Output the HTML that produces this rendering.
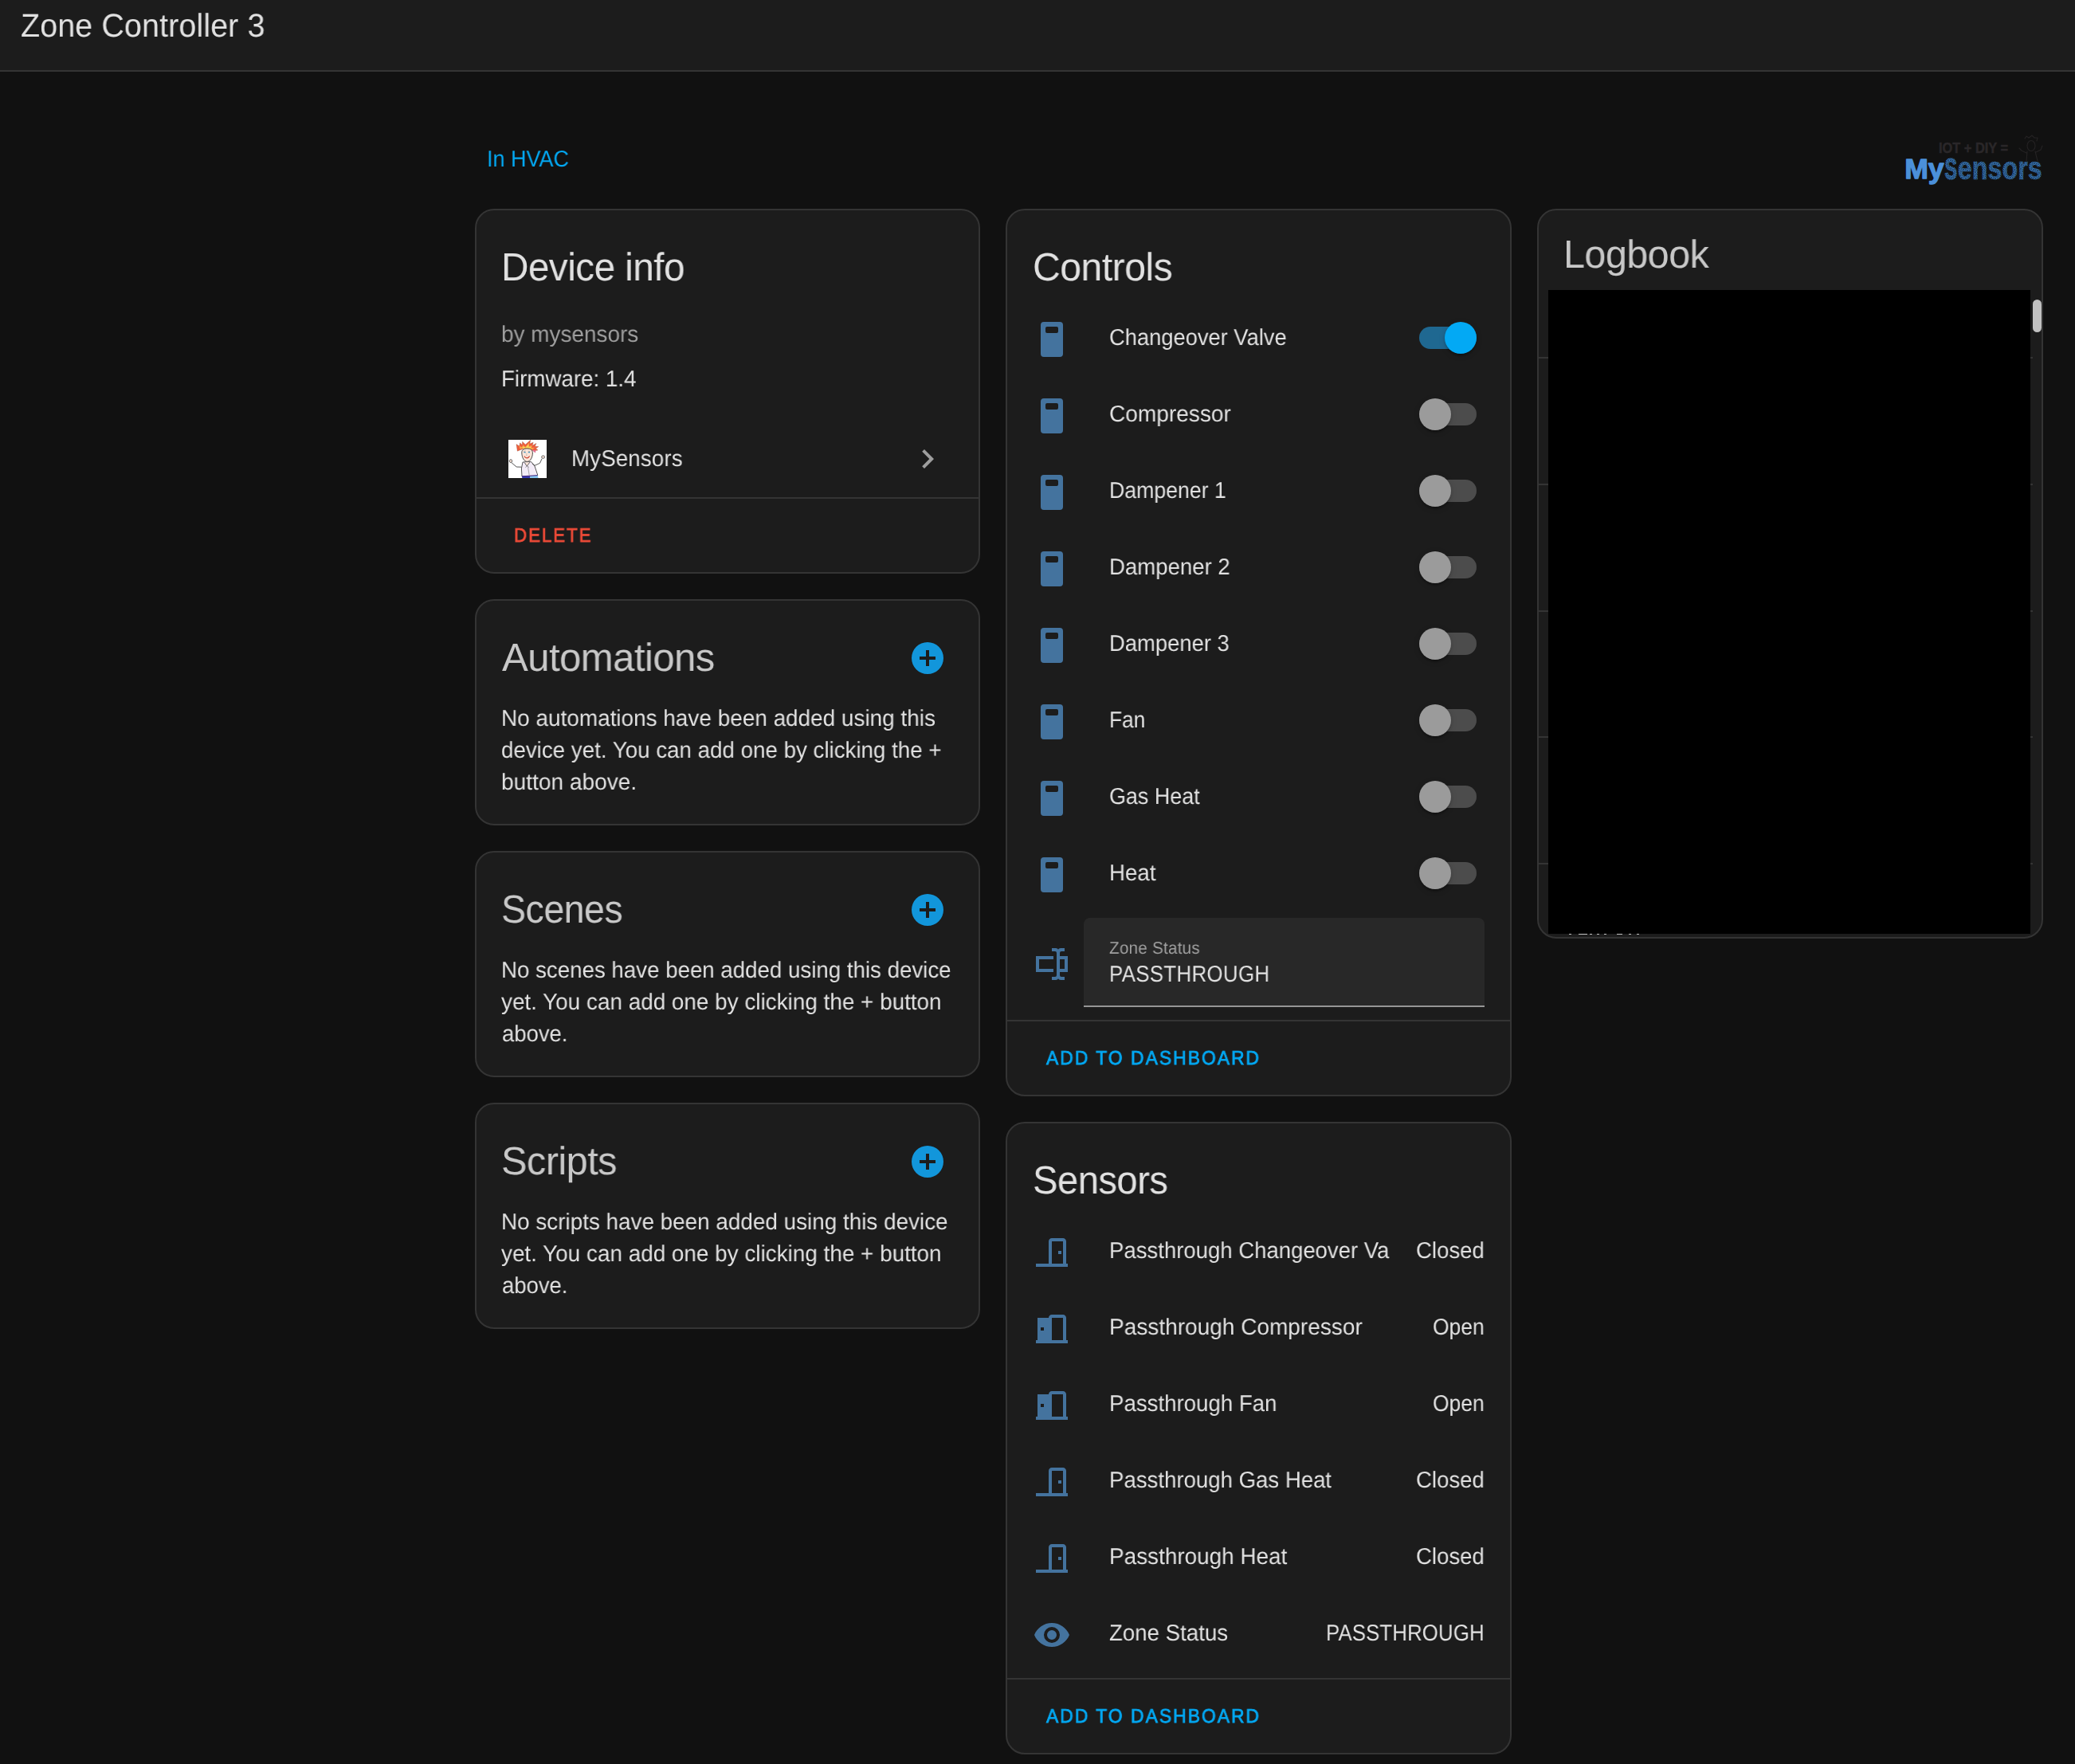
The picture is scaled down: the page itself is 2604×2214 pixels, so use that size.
<!doctype html>
<html lang="en"><head><meta charset="utf-8"><title>Zone Controller 3</title><style>
html,body{margin:0;padding:0}
body{width:2604px;height:2214px;position:relative;overflow:hidden;background:#111;font-family:"Liberation Sans",sans-serif}
.hdr{position:absolute;left:0;top:0;width:2604px;height:88px;background:#1c1c1c;border-bottom:2px solid #343434}
.card{position:absolute;box-sizing:border-box;background:#1c1c1c;border:2px solid #343434;border-radius:24px;margin:0}
.t{position:absolute;white-space:pre;line-height:1;transform-origin:0 0;z-index:2;will-change:transform;text-rendering:geometricPrecision}
.i{position:absolute;display:block;z-index:2}
.hr{position:absolute;height:2px;background:#343434;z-index:1}
.sw{position:absolute;width:72px;height:44px;z-index:2}
.sw b{position:absolute;left:0;top:6px;width:72px;height:28px;border-radius:14px;background:#4c4c4c}
.sw i{position:absolute;left:0;top:0;width:40px;height:40px;border-radius:50%;background:#9b9b9b;box-shadow:0 4px 2px -2px rgba(0,0,0,.2),0 2px 3px rgba(0,0,0,.14),0 2px 8px rgba(0,0,0,.12)}
.sw.on b{background:#1f6891}
.sw.on i{left:32px;background:#03a9f4}
.sel{position:absolute;background:#282828;border-radius:8px 8px 0 0;border-bottom:2px solid #969696;z-index:1}
.redact{position:absolute;background:#000;z-index:3}
.thumb{position:absolute;background:#c1c1c1;border-radius:6px;z-index:3}
.specks{position:absolute;width:90px;height:1px;opacity:.8;z-index:4;background:linear-gradient(90deg,#eee 0 3px,transparent 3px 12px,#eee 12px 23px,transparent 23px 26px,#eee 26px 29px,transparent 29px 35px,#eee 35px 38px,transparent 38px 44px,#eee 44px 47px,transparent 47px 60px,#eee 60px 67px,transparent 67px 75px,#eee 75px 78px,transparent 78px 85px,#eee 85px 88px,transparent 88px)}
</style></head>
<body>
<header class="hdr"><span class="t" style="left:26.36px;top:11.90px;font-size:41.08px;color:#e1e1e1;letter-spacing:0.1px;transform:scaleX(0.9605)">Zone Controller 3</span></header>
<main>
<nav><span class="t" style="left:611.06px;top:186.10px;font-size:28.76px;color:#03a9f4;transform:scaleX(0.9379)">In HVAC</span></nav>
<aside>
<svg class="i" style="left:2380px;top:160px" width="190" height="80" viewBox="2380 160 190 80">
<defs><pattern id="hatch" width="2.6" height="2.6" patternUnits="userSpaceOnUse" patternTransform="rotate(12)"><rect width="2.6" height="2.6" fill="#4088cc"/><path d="M0 0L2.6 2.6M2.6 0L0 2.6" stroke="#152a45" stroke-width="0.75"/></pattern></defs>
<g font-family="'Liberation Sans',sans-serif" font-weight="bold">
<text x="2433" y="191.9" font-size="19" fill="#2a2729" stroke="#2a2729" stroke-width="0.5" textLength="87" lengthAdjust="spacingAndGlyphs">IOT + DIY =</text>
<text x="2390.2" y="223.9" font-size="35" fill="#4b90da" stroke="#4b90da" stroke-width="1.3" stroke-linejoin="round" textLength="49.5" lengthAdjust="spacingAndGlyphs">My</text>
<text x="2440.4" y="224.6" font-size="36.5" fill="url(#hatch)" stroke="url(#hatch)" stroke-width="1.4" stroke-linejoin="round" textLength="15.5" lengthAdjust="spacingAndGlyphs">S</text>
<text x="2456.8" y="224.6" font-size="40" fill="url(#hatch)" stroke="url(#hatch)" stroke-width="0.5" stroke-linejoin="round" textLength="106" lengthAdjust="spacingAndGlyphs">ensors</text>
</g>
<g fill="none" stroke="#252324" stroke-width="1.1" stroke-linecap="round">
<path d="M2541 174l2 -3 3 2 4 -3 3 3 4 0 -1 4"/><ellipse cx="2549" cy="183" rx="5" ry="6.5"/>
<path d="M2544 190l-1 12M2554 190l3 12M2543 192l-6 -3 -3 -3M2555 191l6 -3 2 -5"/>
</g></svg>
</aside>
<article>
<section class="card " style="left:596px;top:262px;width:634px;height:458px"></section>
<span class="t" style="left:629.48px;top:310.80px;font-size:49.30px;color:#e1e1e1;letter-spacing:-0.576px;transform:scaleX(0.9680)">Device info</span><span class="t" style="left:629.39px;top:405.80px;font-size:28.76px;color:#9e9e9e;transform:scaleX(0.9710)">by mysensors</span><span class="t" style="left:629.35px;top:461.80px;font-size:28.76px;color:#e1e1e1;transform:scaleX(0.9644)">Firmware: 1.4</span><span class="t" style="left:716.54px;top:562.00px;font-size:28.76px;color:#e1e1e1;letter-spacing:0.157px;transform:scaleX(0.9621)">MySensors</span><span class="t" style="left:645.32px;top:660.60px;font-size:24.50px;color:#ef4b38;-webkit-text-stroke:0.8px currentColor;letter-spacing:2.19px;transform:scaleX(0.9074)">DELETE</span>
<svg class="i" style="left:638px;top:552px" width="48" height="48" viewBox="0 0 48 48">
<rect width="48" height="48" fill="#fff"/>
<path d="M11.3 14.2L10 5.6 13.8 8 14.6 3.8 17.4 6.6 17.6 2.2 21.4 6 27.8 0.2 26.8 5 31.2 3.2 30 7.2 35 4.4 33.2 8.2 37.8 8.6 34.4 11 37 13 33.6 13.6 33.8 16 30 13 26 11.4 21 11 16 12.2Z" fill="#ef5d3c" stroke="#7a3a2a" stroke-width="0.3"/>
<path d="M14.6 11.4L13.2 7 16.8 9.6 18.4 6.4 21.2 9.2 26.2 3.4 26 8.2 29.6 6.8 29.2 10.2 33 9.8 30 12.2 25 10.4 20 10.2Z" fill="#f8a94a"/>
<path d="M17.5 11L19 8.2 21.5 10 25 6 25.4 9.6 28 9 27.5 11.4 23.5 10.6Z" fill="#fbd65a"/>
<path d="M31 12.4l3.4 1.4 -0.6 2.2 -3.2 -2.4Z" fill="#e86a9a"/>
<path d="M16.8 16C16.8 12.2 19.8 11 23.5 11 27.6 11 30.6 12.4 30.4 17 30.2 21.6 28 27.2 23.6 27.4 19.6 27.4 16.8 22 16.8 16Z" fill="#fbe6da" stroke="#3b3737" stroke-width="0.9"/>
<path d="M19.4 15.5l2.2 0.4M24.8 15.8l2.2 -0.2" stroke="#2487b8" stroke-width="1.1"/>
<path d="M19 14.3l2.8 -0.4M24.6 14.2l2.6 0.3" stroke="#7a6a66" stroke-width="0.4"/>
<path d="M20.2 21c1.7 2.5 4.8 2.4 6.1 -0.2" fill="none" stroke="#c93a27" stroke-width="1.2" stroke-linecap="round"/>
<path d="M23 16.8l-0.3 3.2 1 0.2" fill="none" stroke="#a8948a" stroke-width="0.5"/>
<path d="M18 28L28.6 27.6 33 33 36.8 44.4 35 45.6 17 46 16.4 36Z" fill="#f3ecf8" stroke="#444" stroke-width="0.9"/>
<path d="M20 28.4l3.3 4.6 3.5 -4.8" fill="#fbe6da" stroke="#444" stroke-width="0.8"/>
<path d="M23.3 33l-1.8 1.6M23.3 33l2.4 1.4" stroke="#444" stroke-width="0.6"/>
<path d="M24.6 34.4l1.6 10" stroke="#777" stroke-width="0.6"/>
<path d="M16.4 34.2L10.2 34 3.8 28.6" fill="none" stroke="#444" stroke-width="0.9"/>
<path d="M30 30l3 2.3 6.5 -3 2.6 -5.6" fill="none" stroke="#444" stroke-width="0.9"/>
<ellipse cx="3" cy="26.6" rx="1.7" ry="1.9" fill="#fbe6da" stroke="#444" stroke-width="0.8"/>
<ellipse cx="43.6" cy="21.6" rx="2" ry="1.7" fill="#fbe6da" stroke="#444" stroke-width="0.8"/>
<path d="M17 45.7L27 45.3 27.5 48 17.3 48Z" fill="#3539b0"/><path d="M27 45.3L36.6 44.6 37.6 48 27.5 48Z" fill="#86c4f0"/>
<path d="M17 45.8L36.6 44.6" stroke="#45237e" stroke-width="1"/>
</svg>
<svg class="i" style="left:1140px;top:552px" width="48" height="48" viewBox="0 0 24 24"><path fill="#9e9e9e" d="M8.59,16.58L13.17,12L8.59,7.41L10,6L16,12L10,18L8.59,16.58Z"/></svg>
<div class="hr" style="left:598px;top:624px;width:630px"></div>
</article>
<article>
<section class="card " style="left:596px;top:752px;width:634px;height:284px"></section>
<span class="t" style="left:630.09px;top:800.80px;font-size:49.30px;color:#c8c8c8;letter-spacing:-0.576px;transform:scaleX(0.9967)">Automations</span><span class="t" style="left:629.34px;top:887.80px;font-size:28.76px;color:#e1e1e1;transform:scaleX(0.9713)">No automations have been added using this</span><span class="t" style="left:629.42px;top:927.80px;font-size:28.76px;color:#e1e1e1;transform:scaleX(0.9642)">device yet. You can add one by clicking the +</span><span class="t" style="left:629.38px;top:967.80px;font-size:28.76px;color:#e1e1e1;transform:scaleX(0.9761)">button above.</span>
<svg class="i" style="left:1140px;top:802px" width="48" height="48" viewBox="0 0 24 24"><path fill="#1296db" d="M17,13H13V17H11V13H7V11H11V7H13V11H17M12,2A10,10 0 0,0 2,12A10,10 0 0,0 12,22A10,10 0 0,0 22,12A10,10 0 0,0 12,2Z"/></svg>
</article>
<article>
<section class="card " style="left:596px;top:1068px;width:634px;height:284px"></section>
<span class="t" style="left:629.01px;top:1116.80px;font-size:49.30px;color:#c8c8c8;letter-spacing:-0.576px;transform:scaleX(0.9448)">Scenes</span><span class="t" style="left:629.36px;top:1203.80px;font-size:28.76px;color:#e1e1e1;transform:scaleX(0.9625)">No scenes have been added using this device</span><span class="t" style="left:629.49px;top:1243.80px;font-size:28.76px;color:#e1e1e1;transform:scaleX(0.9697)">yet. You can add one by clicking the + button</span><span class="t" style="left:629.61px;top:1283.80px;font-size:28.76px;color:#e1e1e1;transform:scaleX(0.9551)">above.</span>
<svg class="i" style="left:1140px;top:1118px" width="48" height="48" viewBox="0 0 24 24"><path fill="#1296db" d="M17,13H13V17H11V13H7V11H11V7H13V11H17M12,2A10,10 0 0,0 2,12A10,10 0 0,0 12,22A10,10 0 0,0 22,12A10,10 0 0,0 12,2Z"/></svg>
</article>
<article>
<section class="card " style="left:596px;top:1384px;width:634px;height:284px"></section>
<span class="t" style="left:628.91px;top:1432.80px;font-size:49.30px;color:#c8c8c8;letter-spacing:-0.576px;transform:scaleX(0.9884)">Scripts</span><span class="t" style="left:629.34px;top:1519.80px;font-size:28.76px;color:#e1e1e1;transform:scaleX(0.9689)">No scripts have been added using this device</span><span class="t" style="left:629.49px;top:1559.80px;font-size:28.76px;color:#e1e1e1;transform:scaleX(0.9697)">yet. You can add one by clicking the + button</span><span class="t" style="left:629.61px;top:1599.80px;font-size:28.76px;color:#e1e1e1;transform:scaleX(0.9551)">above.</span>
<svg class="i" style="left:1140px;top:1434px" width="48" height="48" viewBox="0 0 24 24"><path fill="#1296db" d="M17,13H13V17H11V13H7V11H11V7H13V11H17M12,2A10,10 0 0,0 2,12A10,10 0 0,0 12,22A10,10 0 0,0 22,12A10,10 0 0,0 12,2Z"/></svg>
</article>
<article>
<section class="card " style="left:1262px;top:262px;width:635px;height:1114px"></section>
<span class="t" style="left:1296.31px;top:310.80px;font-size:49.30px;color:#e1e1e1;letter-spacing:-0.576px;transform:scaleX(0.9784)">Controls</span><span class="t" style="left:1392.03px;top:410.10px;font-size:28.76px;color:#e1e1e1;transform:scaleX(0.9497)">Changeover Valve</span><span class="t" style="left:1391.99px;top:506.10px;font-size:28.76px;color:#e1e1e1;transform:scaleX(0.9758)">Compressor</span><span class="t" style="left:1391.94px;top:602.10px;font-size:28.76px;color:#e1e1e1;transform:scaleX(0.9273)">Dampener 1</span><span class="t" style="left:1391.87px;top:698.10px;font-size:28.76px;color:#e1e1e1;transform:scaleX(0.9583)">Dampener 2</span><span class="t" style="left:1391.88px;top:794.10px;font-size:28.76px;color:#e1e1e1;transform:scaleX(0.9524)">Dampener 3</span><span class="t" style="left:1391.97px;top:890.10px;font-size:28.76px;color:#e1e1e1;transform:scaleX(0.9152)">Fan</span><span class="t" style="left:1392.07px;top:986.10px;font-size:28.76px;color:#e1e1e1;transform:scaleX(0.9357)">Gas Heat</span><span class="t" style="left:1391.86px;top:1082.10px;font-size:28.76px;color:#e1e1e1;transform:scaleX(0.9611)">Heat</span><span class="t" style="left:1392.24px;top:1179.10px;font-size:21.57px;color:#a0a0a0;letter-spacing:0.204px;transform:scaleX(0.9606)">Zone Status</span><span class="t" style="left:1392.01px;top:1209.20px;font-size:28.76px;color:#e1e1e1;letter-spacing:0.382px;transform:scaleX(0.8986)">PASSTHROUGH</span><span class="t" style="left:1312.97px;top:1316.60px;font-size:24.50px;color:#03a9f4;-webkit-text-stroke:0.8px currentColor;letter-spacing:2.19px;transform:scaleX(0.9318)">ADD TO DASHBOARD</span>
<svg class="i" style="left:1296px;top:402px" width="48" height="48" viewBox="0 0 24 24"><path fill="#44739e" fill-rule="evenodd" d="M7 1H17A2 2 0 0 1 19 3V21A2 2 0 0 1 17 23H7A2 2 0 0 1 5 21V3A2 2 0 0 1 7 1ZM9 4A1 1 0 0 0 8 5V7A1 1 0 0 0 9 8H15A1 1 0 0 0 16 7V5A1 1 0 0 0 15 4Z"/></svg>
<div class="sw on" style="left:1781px;top:404px"><b></b><i></i></div>
<svg class="i" style="left:1296px;top:498px" width="48" height="48" viewBox="0 0 24 24"><path fill="#44739e" fill-rule="evenodd" d="M7 1H17A2 2 0 0 1 19 3V21A2 2 0 0 1 17 23H7A2 2 0 0 1 5 21V3A2 2 0 0 1 7 1ZM9 4A1 1 0 0 0 8 5V7A1 1 0 0 0 9 8H15A1 1 0 0 0 16 7V5A1 1 0 0 0 15 4Z"/></svg>
<div class="sw " style="left:1781px;top:500px"><b></b><i></i></div>
<svg class="i" style="left:1296px;top:594px" width="48" height="48" viewBox="0 0 24 24"><path fill="#44739e" fill-rule="evenodd" d="M7 1H17A2 2 0 0 1 19 3V21A2 2 0 0 1 17 23H7A2 2 0 0 1 5 21V3A2 2 0 0 1 7 1ZM9 4A1 1 0 0 0 8 5V7A1 1 0 0 0 9 8H15A1 1 0 0 0 16 7V5A1 1 0 0 0 15 4Z"/></svg>
<div class="sw " style="left:1781px;top:596px"><b></b><i></i></div>
<svg class="i" style="left:1296px;top:690px" width="48" height="48" viewBox="0 0 24 24"><path fill="#44739e" fill-rule="evenodd" d="M7 1H17A2 2 0 0 1 19 3V21A2 2 0 0 1 17 23H7A2 2 0 0 1 5 21V3A2 2 0 0 1 7 1ZM9 4A1 1 0 0 0 8 5V7A1 1 0 0 0 9 8H15A1 1 0 0 0 16 7V5A1 1 0 0 0 15 4Z"/></svg>
<div class="sw " style="left:1781px;top:692px"><b></b><i></i></div>
<svg class="i" style="left:1296px;top:786px" width="48" height="48" viewBox="0 0 24 24"><path fill="#44739e" fill-rule="evenodd" d="M7 1H17A2 2 0 0 1 19 3V21A2 2 0 0 1 17 23H7A2 2 0 0 1 5 21V3A2 2 0 0 1 7 1ZM9 4A1 1 0 0 0 8 5V7A1 1 0 0 0 9 8H15A1 1 0 0 0 16 7V5A1 1 0 0 0 15 4Z"/></svg>
<div class="sw " style="left:1781px;top:788px"><b></b><i></i></div>
<svg class="i" style="left:1296px;top:882px" width="48" height="48" viewBox="0 0 24 24"><path fill="#44739e" fill-rule="evenodd" d="M7 1H17A2 2 0 0 1 19 3V21A2 2 0 0 1 17 23H7A2 2 0 0 1 5 21V3A2 2 0 0 1 7 1ZM9 4A1 1 0 0 0 8 5V7A1 1 0 0 0 9 8H15A1 1 0 0 0 16 7V5A1 1 0 0 0 15 4Z"/></svg>
<div class="sw " style="left:1781px;top:884px"><b></b><i></i></div>
<svg class="i" style="left:1296px;top:978px" width="48" height="48" viewBox="0 0 24 24"><path fill="#44739e" fill-rule="evenodd" d="M7 1H17A2 2 0 0 1 19 3V21A2 2 0 0 1 17 23H7A2 2 0 0 1 5 21V3A2 2 0 0 1 7 1ZM9 4A1 1 0 0 0 8 5V7A1 1 0 0 0 9 8H15A1 1 0 0 0 16 7V5A1 1 0 0 0 15 4Z"/></svg>
<div class="sw " style="left:1781px;top:980px"><b></b><i></i></div>
<svg class="i" style="left:1296px;top:1074px" width="48" height="48" viewBox="0 0 24 24"><path fill="#44739e" fill-rule="evenodd" d="M7 1H17A2 2 0 0 1 19 3V21A2 2 0 0 1 17 23H7A2 2 0 0 1 5 21V3A2 2 0 0 1 7 1ZM9 4A1 1 0 0 0 8 5V7A1 1 0 0 0 9 8H15A1 1 0 0 0 16 7V5A1 1 0 0 0 15 4Z"/></svg>
<div class="sw " style="left:1781px;top:1076px"><b></b><i></i></div>
<svg class="i" style="left:1296px;top:1186px" width="48" height="48" viewBox="0 0 24 24"><path fill="#44739e" d="M17,7H22V17H17V19A1,1 0 0,0 18,20H20V22H17.5C16.95,22 16,21.55 16,21C16,21.55 15.05,22 14.5,22H12V20H14A1,1 0 0,0 15,19V5A1,1 0 0,0 14,4H12V2H14.5C15.05,2 16,2.45 16,3C16,2.45 16.95,2 17.5,2H20V4H18A1,1 0 0,0 17,5V7M2,7H13V9H4V15H13V17H2V7M20,15V9H17V15H20Z"/></svg>
<div class="sel" style="left:1360px;top:1152px;width:503px;height:110px"></div>
<div class="hr" style="left:1264px;top:1280px;width:631px"></div>
</article>
<article>
<section class="card " style="left:1262px;top:1408px;width:635px;height:794px"></section>
<span class="t" style="left:1295.68px;top:1456.80px;font-size:49.30px;color:#e1e1e1;letter-spacing:-0.576px;transform:scaleX(0.9577)">Sensors</span><span class="t" style="left:1391.87px;top:1556.00px;font-size:28.76px;color:#e1e1e1;transform:scaleX(0.9573)">Passthrough Changeover Va</span><span class="t" style="left:1777.12px;top:1556.00px;font-size:28.76px;color:#e1e1e1;transform:scaleX(0.9580)">Closed</span><span class="t" style="left:1391.83px;top:1652.00px;font-size:28.76px;color:#e1e1e1;transform:scaleX(0.9746)">Passthrough Compressor</span><span class="t" style="left:1798.03px;top:1652.00px;font-size:28.76px;color:#e1e1e1;transform:scaleX(0.9214)">Open</span><span class="t" style="left:1391.86px;top:1748.00px;font-size:28.76px;color:#e1e1e1;transform:scaleX(0.9608)">Passthrough Fan</span><span class="t" style="left:1798.03px;top:1748.00px;font-size:28.76px;color:#e1e1e1;transform:scaleX(0.9214)">Open</span><span class="t" style="left:1391.86px;top:1844.00px;font-size:28.76px;color:#e1e1e1;transform:scaleX(0.9593)">Passthrough Gas Heat</span><span class="t" style="left:1777.12px;top:1844.00px;font-size:28.76px;color:#e1e1e1;transform:scaleX(0.9580)">Closed</span><span class="t" style="left:1391.84px;top:1940.00px;font-size:28.76px;color:#e1e1e1;transform:scaleX(0.9699)">Passthrough Heat</span><span class="t" style="left:1777.12px;top:1940.00px;font-size:28.76px;color:#e1e1e1;transform:scaleX(0.9580)">Closed</span><span class="t" style="left:1392.00px;top:2036.00px;font-size:28.76px;color:#e1e1e1;transform:scaleX(0.9609)">Zone Status</span><span class="t" style="left:1664.19px;top:2036.00px;font-size:28.76px;color:#e1e1e1;letter-spacing:0.132px;transform:scaleX(0.8977)">PASSTHROUGH</span><span class="t" style="left:1312.97px;top:2142.60px;font-size:24.50px;color:#03a9f4;-webkit-text-stroke:0.8px currentColor;letter-spacing:2.19px;transform:scaleX(0.9318)">ADD TO DASHBOARD</span>
<svg class="i" style="left:1296px;top:1548px" width="48" height="48" viewBox="0 0 24 24"><path fill="#44739e" d="M16,11H18V13H16V11M12,3H19C20.11,3 21,3.89 21,5V19H22V21H2V19H10V5C10,3.89 10.89,3 12,3M12,5V19H19V5H12Z"/></svg>
<svg class="i" style="left:1296px;top:1644px" width="48" height="48" viewBox="0 0 24 24"><path fill="#44739e" d="M12,3C10.89,3 10,3.89 10,5H3V19H2V21H22V19H21V5C21,3.89 20.11,3 19,3H12M12,5H19V19H12V5M5,11H7V13H5V11Z"/></svg>
<svg class="i" style="left:1296px;top:1740px" width="48" height="48" viewBox="0 0 24 24"><path fill="#44739e" d="M12,3C10.89,3 10,3.89 10,5H3V19H2V21H22V19H21V5C21,3.89 20.11,3 19,3H12M12,5H19V19H12V5M5,11H7V13H5V11Z"/></svg>
<svg class="i" style="left:1296px;top:1836px" width="48" height="48" viewBox="0 0 24 24"><path fill="#44739e" d="M16,11H18V13H16V11M12,3H19C20.11,3 21,3.89 21,5V19H22V21H2V19H10V5C10,3.89 10.89,3 12,3M12,5V19H19V5H12Z"/></svg>
<svg class="i" style="left:1296px;top:1932px" width="48" height="48" viewBox="0 0 24 24"><path fill="#44739e" d="M16,11H18V13H16V11M12,3H19C20.11,3 21,3.89 21,5V19H22V21H2V19H10V5C10,3.89 10.89,3 12,3M12,5V19H19V5H12Z"/></svg>
<svg class="i" style="left:1296px;top:2028px" width="48" height="48" viewBox="0 0 24 24"><path fill="#44739e" d="M12,9A3,3 0 0,0 9,12A3,3 0 0,0 12,15A3,3 0 0,0 15,12A3,3 0 0,0 12,9M12,17A5,5 0 0,1 7,12A5,5 0 0,1 12,7A5,5 0 0,1 17,12A5,5 0 0,1 12,17M12,4.5C7,4.5 2.73,7.61 1,12C2.73,16.39 7,19.5 12,19.5C17,19.5 21.27,16.39 23,12C21.27,7.61 17,4.5 12,4.5Z"/></svg>
<div class="hr" style="left:1264px;top:2106px;width:631px"></div>
</article>
<article>
<section class="card " style="left:1929px;top:262px;width:635px;height:916px"></section>
<span class="t" style="left:1962.31px;top:294.80px;font-size:49.30px;color:#c8c8c8;letter-spacing:-0.576px;transform:scaleX(0.9845)">Logbook</span>
<div class="hr" style="left:1931px;top:448px;width:620px"></div>
<div class="hr" style="left:1931px;top:607px;width:620px"></div>
<div class="hr" style="left:1931px;top:766px;width:620px"></div>
<div class="hr" style="left:1931px;top:924px;width:620px"></div>
<div class="hr" style="left:1931px;top:1083px;width:620px"></div>
<div class="redact" style="left:1943px;top:364px;width:605px;height:808px"></div>
<div class="thumb" style="left:2551px;top:376px;width:11px;height:41px"></div>
<div class="specks" style="left:1969px;top:1172px"></div>
</article>
</main>
</body></html>
